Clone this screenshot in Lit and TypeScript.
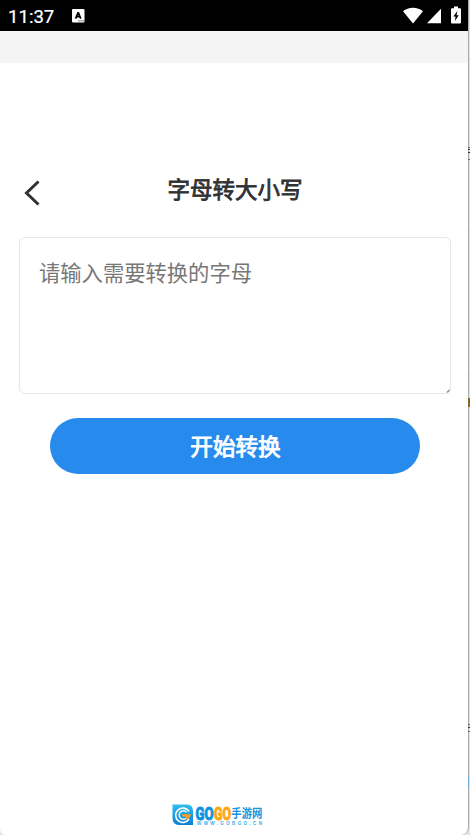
import { LitElement, html, css } from "lit";
import { customElement } from "lit/decorators.js";

@customElement("status-bar")
class StatusBar extends LitElement {
  static styles = css`
    :host { display: flex; align-items: center; height: 31px; background: #000; color: #fff; box-sizing: border-box; padding: 0 7px 0 8px; }
    .time { font: 400 18.6px/31px Roboto, sans-serif; -webkit-text-stroke: 0.2px #fff; padding-top: 3px; width: 63.5px; }
    .spacer { flex: 1; }
    svg { display: block; flex: none; }
    .wifi { margin-right: 4px; }
    .signal { margin-right: 10px; }
  `;
  render() {
    return html`
      <span class="time">11:37</span>
      <svg width="13" height="31" viewBox="0 0 13 31">
        <rect x="0" y="9" width="12.5" height="13.5" rx="1" fill="#fff" />
        <path d="M3.6 18.6 6.2 12.4 8.8 18.6M4.6 16.6H7.8" fill="none" stroke="#000" stroke-width="1.7" stroke-linejoin="bevel" />
        <path d="M6.5 20.8h1M8.6 20.8h1M10.6 20.8h1" stroke="#000" stroke-width="1" />
      </svg>
      <span class="spacer"></span>
      <svg class="wifi" width="20" height="31" viewBox="0 0 20 31">
        <path d="M0 11.3Q4 7.8 10 7.8T20 11.3L10 23.5Z" fill="#fff" />
      </svg>
      <svg class="signal" width="14" height="31" viewBox="0 0 14 31">
        <path d="M14 8.8V23.3H0Z" fill="#fff" />
      </svg>
      <svg width="10" height="31" viewBox="0 0 10 31">
        <path d="M3 6.6H7V8.2H9Q10 8.2 10 9.2V22.5Q10 23.6 9 23.6H1Q0 23.6 0 22.5V9.2Q0 8.2 1 8.2H3Z" fill="#fff" />
        <path d="M6.3 11 2.4 16.5H4.5L4 21 7.7 15.2H5.6Z" fill="#000" />
      </svg>
    `;
  }
}

@customElement("site-logo")
class SiteLogo extends LitElement {
  static styles = css`
    :host { display: block; width: 92px; height: 22px; }
    svg { display: block; overflow: visible; }
    .word { font-family: Roboto, sans-serif; font-weight: 700; font-size: 19px; }
    .han { font-family: "Noto Sans CJK SC", sans-serif; font-weight: 700; font-size: 12px; }
    .url { font-family: "Liberation Sans", sans-serif; font-weight: 700; font-size: 4.6px; }
  `;
  render() {
    return html`
      <svg width="92" height="22" viewBox="0 0 92 22">
        <defs>
          <linearGradient id="blue" x2="0" y2="1"><stop stop-color="#30bcf0" /><stop offset="1" stop-color="#0a80d2" /></linearGradient>
          <linearGradient id="gold" x2="0" y2="1"><stop stop-color="#ffc020" /><stop offset="1" stop-color="#ff9800" /></linearGradient>
        </defs>
        <path d="M.5.5H15Q21 .5 21 7V21H7Q.5 21 .5 14Z" fill="url(#blue)" />
        <path d="M17 7.5A7.2 7.2 0 1 0 17 15" fill="none" stroke="#fff" stroke-width="1.6" />
        <path d="M14.5 8.2A4.2 4.2 0 1 0 14 14.3" fill="none" stroke="#e6f8ff" stroke-width="1.6" />
        <path d="M9.5 10.3H19L17.7 13.5 14.5 15.8 14 12.8H11Z" fill="#ff9d19" />
        <text class="word" x="23.5" y="15.8" textLength="18" lengthAdjust="spacingAndGlyphs" fill="#0f92de" stroke="#0f92de" stroke-width="1.1">GO</text>
        <text class="word" x="42" y="15.8" textLength="17" lengthAdjust="spacingAndGlyphs" fill="#ffa50e" stroke="#ffa50e" stroke-width="1.1">GO</text>
        <text class="han" x="59.3" y="13.8" textLength="31" lengthAdjust="spacingAndGlyphs" fill="#1595dc">手游网</text>
        <text class="url" x="25" y="21" textLength="65" fill="#35b2e8">WWW.GOBGO.CN</text>
      </svg>
    `;
  }
}

@customElement("app-root")
class AppRoot extends LitElement {
  static styles = css`
    :host {
      display: flex; width: 470px; height: 835px; overflow: hidden; background: #e4e4e4;
      font-family: "Noto Sans CJK SC", sans-serif;
    }
    .window {
      display: flex; flex-direction: column; width: 469px; height: 835px; box-sizing: border-box;
      border-right: 1px solid #ababab; border-radius: 0 0 8px 6px; background: #fff; overflow: hidden; flex: none;
    }
    .strip { height: 32px; background: #f4f4f4; flex: none; }
    .header { display: grid; grid-template-columns: 60px 1fr 60px; height: 40px; margin: 105px -2px 0 0; align-items: center; flex: none; }
    .back { display: block; margin: 10px 0 0 24px; }
    h1 { margin: 0; text-align: center; font-size: 22.5px; font-weight: 400; -webkit-text-stroke: 0.8px #303132; line-height: 40px; color: #303132; }
    textarea {
      display: block; box-sizing: border-box; width: 432px; height: 157px; margin: 29px 0 0 19px; padding: 18px 19px;
      border: 1px solid #e6e6e6; border-radius: 6px; background: #fff; outline: none; resize: none; flex: none;
      font: 400 21.3px/32px "Noto Sans CJK SC", sans-serif; color: #303132;
    }
    textarea::placeholder { color: #777; opacity: 1; }
    .field { position: relative; flex: none; }
    .grip { position: absolute; left: 446px; top: 181px; }
    .convert {
      width: 370px; height: 56px; margin: 24px 0 0 50px; padding: 0 0 0 1px; border: 0; border-radius: 28px;
      background: #278bed; color: #fff; font: 400 22.6px/56px "Noto Sans CJK SC", sans-serif; -webkit-text-stroke: 0.9px #fff; flex: none;
    }
    site-logo { margin: auto 0 9px 172px; }
    .edge { position: absolute; left: 468px; top: 0; }
  `;
  render() {
    return html`
      <div class="window">
        <status-bar></status-bar>
        <div class="strip"></div>
        <div class="header">
          <svg class="back" width="17" height="26" viewBox="0 0 17 26">
            <path d="M14.5 1.5 2.5 13 14.5 24.5" fill="none" stroke="#303132" stroke-width="3" />
          </svg>
          <h1>字母转大小写</h1>
        </div>
        <div class="field">
          <textarea placeholder="请输入需要转换的字母"></textarea>
          <svg class="grip" width="4" height="4" viewBox="0 0 4 4"><path d="M0 3.5 3.5 0V2L2 3.5Z" fill="#888" /></svg>
        </div>
        <button class="convert">开始转换</button>
        <site-logo></site-logo>
      </div>
      <svg class="edge" width="2" height="835" viewBox="0 0 2 835">
        <path d="M1 4h1M1 59h1M1 132h1M1 173h1M1 190h1M1 231h1M1 375h1" stroke="#c8c8c8" />
        <path d="M0 149.5h2M0 152.5h2M0 727.5h2" stroke="#333" />
        <path d="M0 147.5h2M0 159.5h2M0 724.5h2M0 731.5h2" stroke="#8a6547" />
        <path d="M0 398h1v9H0Z" fill="#8a6a28" />
        <path d="M1 398h1v9H1Z" fill="#267aa8" />
        <path d="M0 776h1v12H0Z" fill="#70a8d4" />
      </svg>
    `;
  }
}
